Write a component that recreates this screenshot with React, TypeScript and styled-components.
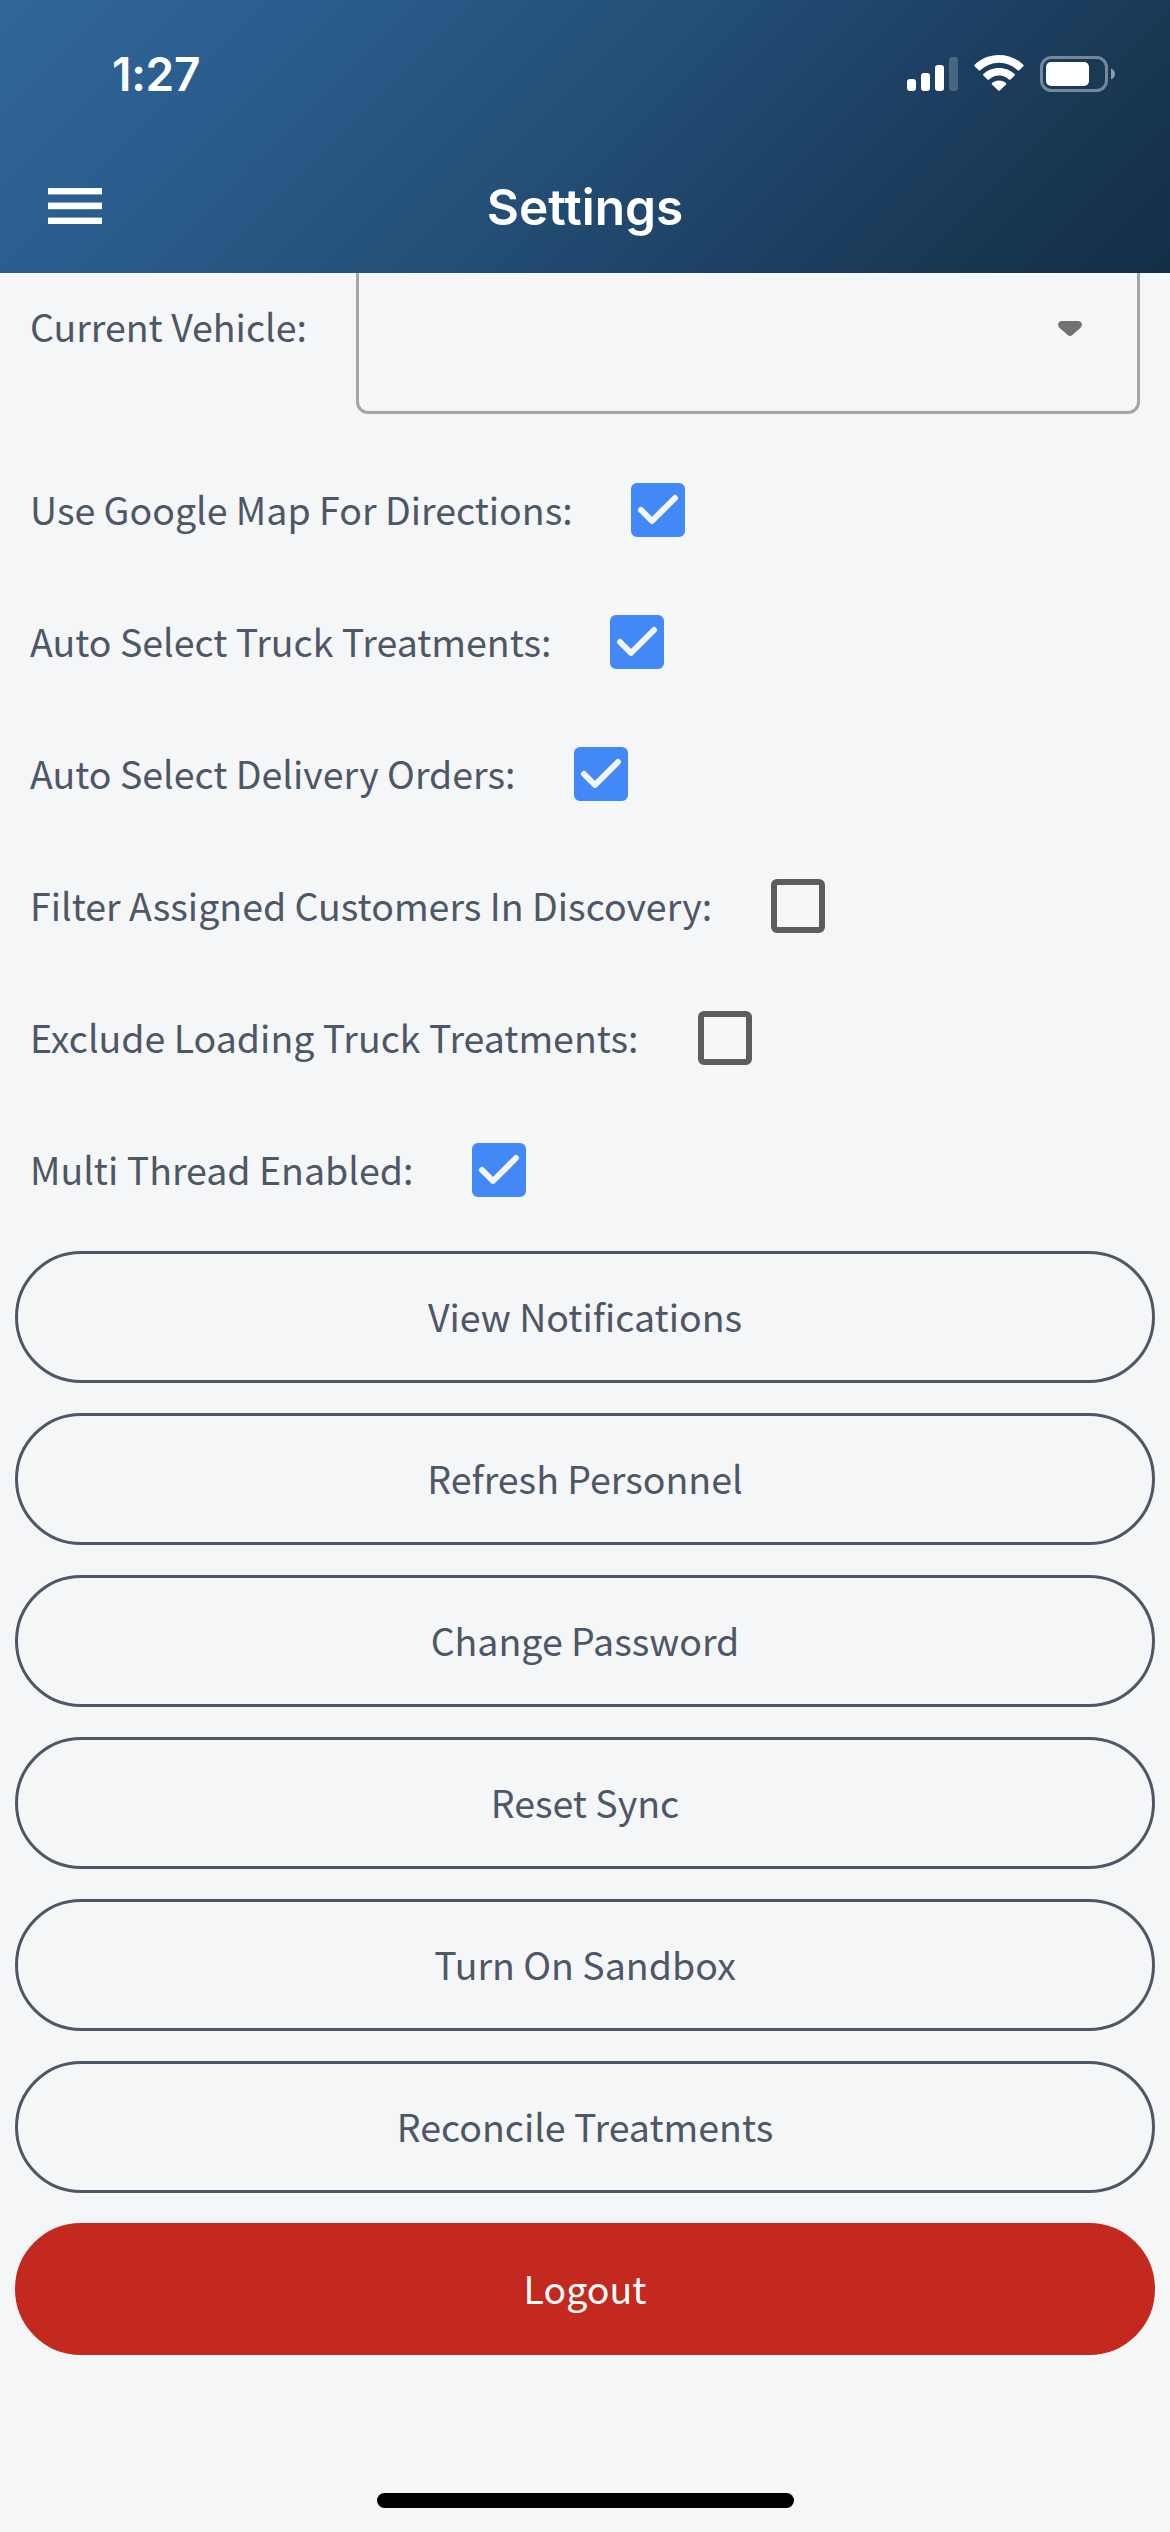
import React, { useState } from "react";
import styled, { createGlobalStyle } from "styled-components";

const GlobalStyle = createGlobalStyle`
  *, *::before, *::after { box-sizing: border-box; }
  body { margin: 0; background: #f5f6f8; }
`;

const Screen = styled.div`
  display: flex;
  flex-direction: column;
  width: 1170px;
  height: 2532px;
  overflow: hidden;
  background: #f5f6f8;
  color: #4e5765;
  font-family: "Noto Sans CJK SC", "Noto Sans", sans-serif;
`;

const Header = styled.header`
  flex: none;
  display: flex;
  flex-direction: column;
  height: 273px;
  color: #fff;
  font-family: Inter, "Liberation Sans", sans-serif;
  background: linear-gradient(135deg, #306698 0%, #2a5d8d 22%, #244f77 48%, #1d4165 68%, #193752 84%, #142e46 100%);
`;

const StatusBar = styled.div`
  display: flex;
  justify-content: space-between;
  height: 140px;
  padding: 55px 54px 0 112px;
`;

const Time = styled.span`
  font-size: 46px;
  font-weight: 600;
  line-height: 38px;
  letter-spacing: -0.3px;
`;

const StatusIcons = styled.svg`
  width: 209px;
  height: 38px;
  margin-top: -1px;
`;

const Toolbar = styled.div`
  display: grid;
  grid-template-columns: 102px 1fr 102px;
  align-items: center;
  height: 132px;
`;

const MenuButton = styled.button`
  height: 36px;
  padding: 0 0 0 48px;
  border: 0;
  background: none;
  line-height: 0;
`;

const Title = styled.h1`
  margin: 0;
  padding-top: 2px;
  font-size: 49.6px;
  font-weight: 600;
  line-height: 60px;
  text-align: center;
`;

const Content = styled.main`
  flex: 1;
  min-height: 0;
  overflow: hidden;
  padding: 0 15px;
`;

const VehicleRow = styled.div`
  display: flex;
  align-items: center;
  height: 171px;
  margin-top: -30px;
  padding: 0 15px;
`;

const Label = styled.span`
  padding-bottom: 3px;
  font-size: 37.5px;
  line-height: 56px;
  white-space: nowrap;
`;

const VehicleLabel = styled(Label)`
  width: 326px;
  padding-bottom: 6px;
`;

const Select = styled.div`
  flex: 1;
  display: flex;
  align-items: center;
  justify-content: flex-end;
  height: 171px;
  padding-right: 55px;
  border: 3px solid #a4a5a6;
  border-radius: 12px;
`;

const Options = styled.div`
  padding: 30px 15px 0;
`;

const OptionRow = styled.label`
  display: flex;
  align-items: center;
  height: 132px;
`;

const OptionLabel = styled(Label)<{ $width: number }>`
  width: ${(p) => p.$width}px;
`;

const HiddenInput = styled.input`
  appearance: none;
  margin: 0;
  width: 0;
  height: 0;
`;

const Box = styled.span<{ $checked: boolean }>`
  flex: none;
  width: 54px;
  height: 54px;
  border: 6px solid ${(p) => (p.$checked ? "#4388f7" : "#5d5d5d")};
  border-radius: 6px;
  background: ${(p) => (p.$checked ? "#4388f7" : "transparent")};
  line-height: 0;
`;

const Actions = styled.div`
  display: flex;
  flex-direction: column;
  gap: 30px;
  padding-top: 15px;
`;

const ActionButton = styled.button<{ $danger?: boolean }>`
  height: 132px;
  padding: 0 0 3px;
  border: 3px solid ${(p) => (p.$danger ? "#c3291f" : "#4e5765")};
  border-radius: 66px;
  background: ${(p) => (p.$danger ? "#c3291f" : "transparent")};
  color: ${(p) => (p.$danger ? "#fff" : "inherit")};
  font-family: inherit;
  font-size: 37.5px;
  line-height: 56px;
`;

const HomeArea = styled.footer`
  flex: none;
  display: flex;
  justify-content: center;
  height: 39px;
`;

const HomeIndicator = styled.div`
  width: 417px;
  height: 15px;
  border-radius: 8px;
  background: #000;
`;

const options = [
  { name: "Use Google Map For Directions:", on: true, width: 601 },
  { name: "Auto Select Truck Treatments:", on: true, width: 580 },
  { name: "Auto Select Delivery Orders:", on: true, width: 544 },
  { name: "Filter Assigned Customers In Discovery:", on: false, width: 741 },
  { name: "Exclude Loading Truck Treatments:", on: false, width: 668 },
  { name: "Multi Thread Enabled:", on: true, width: 442 },
];

const actions = [
  "View Notifications",
  "Refresh Personnel",
  "Change Password",
  "Reset Sync",
  "Turn On Sandbox",
  "Reconcile Treatments",
];

function Option({ name, on, width }: { name: string; on: boolean; width: number }) {
  const [checked, setChecked] = useState(on);
  return (
    <OptionRow>
      <OptionLabel $width={width}>{name}</OptionLabel>
      <HiddenInput type="checkbox" checked={checked} onChange={() => setChecked(!checked)} />
      <Box $checked={checked}>
        {checked && (
          <svg width="42" height="42" viewBox="6 6 42 42">
            <path d="M10 27L21 38L44 15" fill="none" stroke="#f5f6f8" strokeWidth="6" strokeLinecap="round" strokeLinejoin="round" />
          </svg>
        )}
      </Box>
    </OptionRow>
  );
}

export default function App() {
  return (
    <>
      <GlobalStyle />
      <Screen>
        <Header>
          <StatusBar>
            <Time>1:27</Time>
            <StatusIcons viewBox="907 54 209 38" fill="#fff">
              <rect x="907" y="79" width="9" height="12" rx="3" />
              <rect x="921" y="73" width="9" height="18" rx="3" />
              <rect x="935" y="65" width="9" height="26" rx="3" />
              <rect x="949" y="57" width="9" height="34" rx="3" opacity="0.2" />
              <path d="M999 55C1008.500 55 1017.200 58.700 1023.300 64.700Q1024 65.500 1023.300 66.300L1019.300 70.200Q1018.500 71 1017.700 70.200A27 27 0 0 0 980.300 70.200Q979.500 71 978.700 70.200L974.700 66.300Q974 65.500 974.700 64.700C980.800 58.700 989.500 55 999 55Z" />
              <path d="M999 68C1005 68 1010.600 70.200 1014.600 74Q1015.400 74.800 1014.600 75.600L1010.500 79.500Q1009.700 80.200 1008.900 79.500A14.500 14.500 0 0 0 989.100 79.500Q988.300 80.200 987.500 79.500L983.400 75.600Q982.600 74.800 983.400 74C987.400 70.200 993 68 999 68Z" />
              <path d="M999 80.500C1001.700 80.500 1004.200 81.500 1006 83.100Q1006.700 83.800 1006 84.500L999.800 90.500Q999 91.200 998.200 90.500L992 84.500Q991.300 83.800 992 83.100C993.800 81.500 996.300 80.500 999 80.500Z" />
              <rect x="1041.500" y="57.500" width="65" height="33" rx="10" fill="none" stroke="#fff" strokeWidth="3" opacity="0.4" />
              <rect x="1046" y="62" width="43" height="24" rx="5" />
              <path d="M1111 68.500C1116.300 70.500 1116.300 77.500 1111 79.500Z" opacity="0.5" />
            </StatusIcons>
          </StatusBar>
          <Toolbar>
            <MenuButton aria-label="Menu">
              <svg width="54" height="36" viewBox="0 0 54 36" fill="#fff">
                <rect y="0" width="54" height="6.400" />
                <rect y="14.600" width="54" height="6.600" />
                <rect y="29.600" width="54" height="6.400" />
              </svg>
            </MenuButton>
            <Title>Settings</Title>
          </Toolbar>
        </Header>
        <Content>
          <VehicleRow>
            <VehicleLabel>Current Vehicle:</VehicleLabel>
            <Select>
              <svg width="24" height="15" viewBox="0 0 24 15">
                <path d="M3.500 0H20.500Q23 0 23.800 2.500Q24.300 5 22.600 6.800L14.300 14Q12 16 9.700 14L1.400 6.800Q-0.300 5 0.200 2.500Q1 0 3.500 0Z" fill="#707173" />
              </svg>
            </Select>
          </VehicleRow>
          <Options>
            {options.map((o) => (
              <Option key={o.name} {...o} />
            ))}
          </Options>
          <Actions>
            {actions.map((a) => (
              <ActionButton key={a}>{a}</ActionButton>
            ))}
            <ActionButton $danger>Logout</ActionButton>
          </Actions>
        </Content>
        <HomeArea>
          <HomeIndicator />
        </HomeArea>
      </Screen>
    </>
  );
}
